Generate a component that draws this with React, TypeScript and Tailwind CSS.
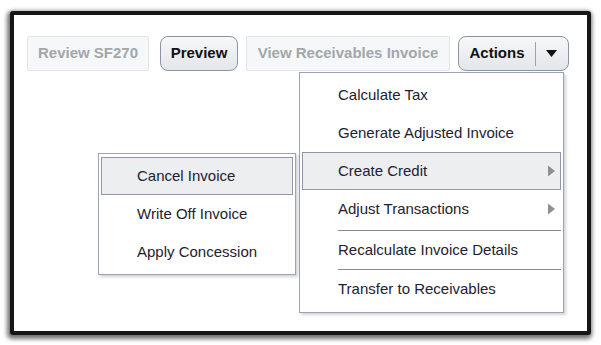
import React from "react";

const Arrow = () => (
  <svg width="7" height="11" viewBox="0 0 7 11" className="absolute right-[5px] top-1/2 -translate-y-1/2">
    <polygon points="0,0 7,5.5 0,11" fill="#8f8f8f" />
  </svg>
);

function Item({ label, active, arrow }: { label: string; active?: boolean; arrow?: boolean }) {
  return (
    <div
      className={
        "relative mx-[2px] h-[38px] flex items-center pl-[35px] text-[15px] text-[#1e2230] " +
        (active ? "bg-[#eceef0] border border-[#8d97a5]" : "border border-transparent")
      }
    >
      {label}
      {arrow && <Arrow />}
    </div>
  );
}

export default function App() {
  return (
    <div className="w-[601px] h-[345px] bg-white overflow-hidden font-['Liberation_Sans',Arial,sans-serif]">
      <div className="relative ml-[10px] mt-[11px] w-[581px] h-[324px] border-[4px] border-[#161616] rounded-[3px] bg-white shadow-[-1px_2px_4px_2px_rgba(0,0,0,0.55)]">
        <div className="flex items-center pl-[13px] pt-[21px]">
          <div className="h-[35px] w-[122px] flex items-center justify-center rounded-[2px] border border-[#e2e5e9] bg-[#f6f7f8] text-[15px] font-bold text-[#a3a7ab]">
            Review SF270
          </div>
          <div className="ml-[11px] h-[35px] w-[78px] flex items-center justify-center rounded-[8px] border border-[#8a96a6] bg-gradient-to-b from-[#f6f7f8] to-[#e3e6ea] text-[15px] font-bold text-[#111]">
            Preview
          </div>
          <div className="ml-[8px] h-[35px] w-[204px] flex items-center justify-center rounded-[2px] border border-[#e2e5e9] bg-[#f6f7f8] text-[15px] font-bold text-[#a3a7ab]">
            View Receivables Invoice
          </div>
          <div className="ml-[8px] h-[35px] w-[111px] flex items-center rounded-[8px] border border-[#8a96a6] bg-gradient-to-b from-[#f6f7f8] to-[#e3e6ea] text-[15px] font-bold text-[#111]">
            <span className="w-[76px] text-center">Actions</span>
            <span className="h-[24px] border-l border-[#9aa3ae]" />
            <span className="flex-1 flex justify-center pr-[2px]">
              <svg width="11" height="7" viewBox="0 0 11 7">
                <polygon points="0,0 11,0 5.5,7" fill="#111" />
              </svg>
            </span>
          </div>
        </div>

        {/* main actions menu */}
        <div className="absolute left-[285px] top-[57px] w-[265px] border border-[#9aa4b3] bg-white pt-[3px] pb-[4px] shadow-[2px_2px_3px_rgba(0,0,0,0.18)]">
          <Item label="Calculate Tax" />
          <Item label="Generate Adjusted Invoice" />
          <Item label="Create Credit" active arrow />
          <Item label="Adjust Transactions" arrow />
          <div className="h-[3px] ml-[38px] mr-[2px] border-b border-[#8a8a8a]" />
          <Item label="Recalculate Invoice Details" />
          <div className="h-[1px] ml-[38px] mr-[2px] border-b border-[#8a8a8a]" />
          <Item label="Transfer to Receivables" />
        </div>

        {/* submenu */}
        <div className="absolute left-[84px] top-[138px] w-[198px] border border-[#9aa4b3] bg-white pt-[3px] pb-[3px] shadow-[2px_2px_3px_rgba(0,0,0,0.18)]">
          <Item label="Cancel Invoice" active />
          <Item label="Write Off Invoice" />
          <Item label="Apply Concession" />
        </div>
      </div>
    </div>
  );
}
